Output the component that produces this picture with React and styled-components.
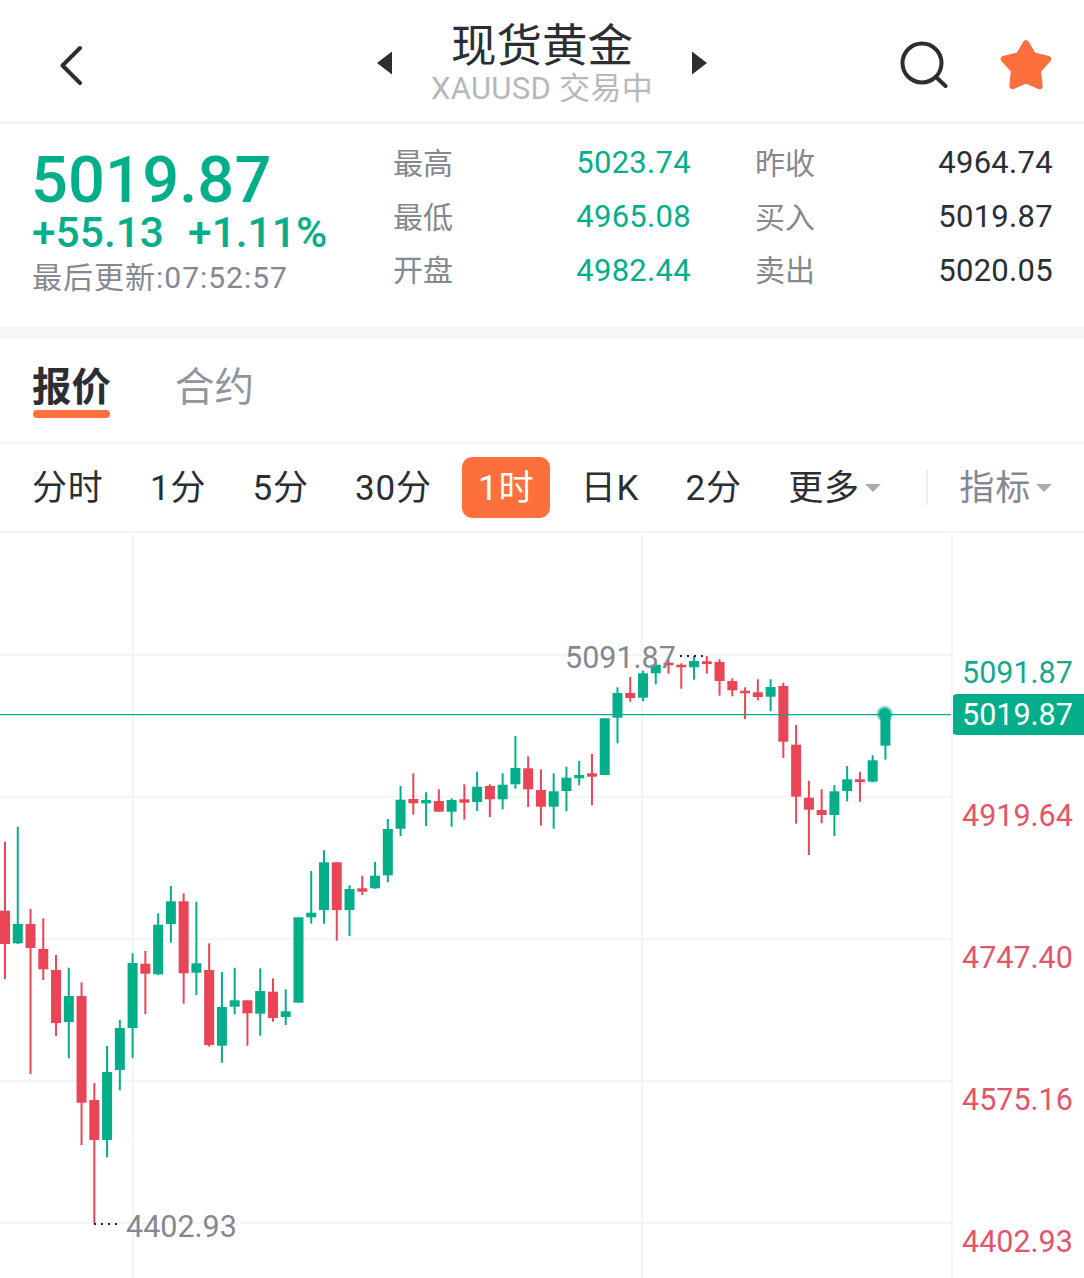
import styled, { createGlobalStyle } from "styled-components";

const GREEN = "#05ae8b";
const RED = "#ea4557";
const ORANGE = "#fd6f3d";
const DARK = "#2b2e33";
const GREY = "#85888f";
const LINE = "#f5f5f7";

const GlobalStyle = createGlobalStyle`
    html, body {
        margin: 0;
        padding: 0;
        background: #fff;
    }
    body {
        font-family: Roboto, "Noto Sans CJK SC", sans-serif;
        color: ${DARK};
    }
`;

const Page = styled.div`
    width: 1084px;
    height: 1278px;
    overflow: hidden;
    background: #fff;
    display: flex;
    flex-direction: column;
`;

const Header = styled.header`
    height: 124px;
    box-sizing: border-box;
    padding-top: 9px;
    display: grid;
    grid-template-columns: 1fr 332px 1fr;
    align-items: center;
    border-bottom: 3px solid ${LINE};
`;

const BackButton = styled.div`
    padding-left: 59px;
    display: flex;
    align-items: center;
`;

const Switcher = styled.div`
    display: flex;
    align-items: center;
    justify-content: space-between;
`;

const Arrow = styled.svg`
    margin-top: -4px;
`;

const Titles = styled.div`
    display: flex;
    flex-direction: column;
    align-items: center;
`;

const Title = styled.div`
    font-size: 45.5px;
    line-height: 50px;
    margin-top: -1px;
    color: ${DARK};
`;

const Subtitle = styled.div`
    font-size: 31px;
    line-height: 36px;
    margin-top: -1px;
    color: #b6b8bd;
    letter-spacing: 0.3px;
`;

const HeaderActions = styled.div`
    display: flex;
    justify-content: flex-end;
    align-items: center;
    gap: 50px;
    padding-right: 30px;
`;

const StatsSection = styled.section`
    height: 203px;
    display: flex;
    border-bottom: 12px solid #f4f6f8;
    padding-left: 33px;
`;

const PriceBlock = styled.div`
    width: 360px;
    display: flex;
    flex-direction: column;
`;

const BigPrice = styled.div`
    font-size: 65px;
    line-height: 66px;
    font-weight: 500;
    color: ${GREEN};
    margin: 23px 0 0 -2px;
    letter-spacing: 0.1px;
`;

const ChangeRow = styled.div`
    display: flex;
    gap: 24px;
    font-size: 42.5px;
    line-height: 42px;
    font-weight: 500;
    color: ${GREEN};
    margin: -1px 0 0 -1px;
`;

const UpdateTime = styled.div`
    font-size: 30px;
    line-height: 36px;
    margin: 6px 0 0 -1px;
    letter-spacing: 1px;
    color: ${GREY};
`;

const StatsGrid = styled.div`
    display: grid;
    grid-template-columns: 298px 298px;
    grid-auto-rows: 53.7px;
    column-gap: 64px;
    padding-top: 12px;
`;

const StatCell = styled.div`
    display: flex;
    align-items: center;
    justify-content: space-between;
`;

const StatLabel = styled.span`
    font-size: 30px;
    margin-top: -4px;
    color: ${GREY};
`;

const StatValue = styled.span`
    font-size: 31px;
    letter-spacing: 0.3px;
    color: ${(props) => (props.$green ? GREEN : DARK)};
`;

const Tabs = styled.nav`
    height: 103px;
    display: flex;
    gap: 64px;
    padding-left: 32px;
    border-bottom: 2px solid ${LINE};
`;

const Tab = styled.div`
    position: relative;
    font-size: 39.5px;
    line-height: 44px;
    padding-top: 27px;
    font-weight: ${(props) => (props.$active ? 700 : 400)};
    color: ${(props) => (props.$active ? DARK : "#93959d")};

    ${(props) =>
        props.$active &&
        `&::after {
            content: "";
            position: absolute;
            left: 1px;
            right: 1px;
            top: 71px;
            height: 8px;
            border-radius: 4px;
            background: ${ORANGE};
        }`}
`;

const Toolbar = styled.div`
    height: 87px;
    display: flex;
    align-items: center;
    gap: 14.3px;
    padding-left: 16px;
    border-bottom: 2px solid ${LINE};
`;

const Period = styled.div`
    height: 61px;
    box-sizing: border-box;
    padding: 0 16px 6px;
    display: flex;
    align-items: center;
    font-size: 35px;
    letter-spacing: 0.8px;
    border-radius: 10px;
    white-space: nowrap;
    color: ${(props) => (props.$active ? "#fff" : props.$muted ? GREY : DARK)};
    background: ${(props) => (props.$active ? ORANGE : "transparent")};
`;

const Caret = styled.i`
    width: 0;
    height: 0;
    margin: 6px 0 0 5px;
    border-left: 8px solid transparent;
    border-right: 8px solid transparent;
    border-top: 8px solid #a9abb0;
`;

const ToolDivider = styled.div`
    width: 2px;
    height: 35px;
    background: #eeeef0;
    margin-left: 15px;
    margin-right: 1px;
`;

const ChartArea = styled.div`
    flex: 1;
    display: flex;
    min-height: 0;
`;

const Plot = styled.div`
    position: relative;
    width: 953px;
    border-right: 2px solid ${LINE};
    box-sizing: border-box;

    svg {
        display: block;
    }
`;

const ExtremeLabel = styled.div`
    position: absolute;
    left: ${(props) => props.$x}px;
    top: ${(props) => props.$y}px;
    font-size: 30.5px;
    line-height: 36px;
    color: ${GREY};
`;

const Axis = styled.div`
    flex: 1;
    display: flex;
    flex-direction: column;
    padding-top: 120px;
    margin-left: -2px;
`;

const AxisLabel = styled.div`
    height: 40px;
    line-height: 40px;
    padding-left: 11px;
    margin-top: ${(props) => props.$gap}px;
    font-size: 30.5px;
    color: ${(props) => (props.$up ? "#17a98c" : "#e2566a")};
`;

const PriceTag = styled.div`
    height: 41px;
    line-height: 41px;
    margin-top: 1px;
    padding-left: 11px;
    border-radius: 6px 0 0 6px;
    background: ${GREEN};
    color: #fff;
    font-size: 30.5px;
`;

const stats = [
    ["最高", "5023.74", "昨收", "4964.74"],
    ["最低", "4965.08", "买入", "5019.87"],
    ["开盘", "4982.44", "卖出", "5020.05"],
];

const periods = ["分时", "1分", "5分", "30分", "1时", "日K", "2分"];

// [colour, wick top, body top, body bottom, wick bottom], page y coordinates
const candles = [
    ["r", 841.7, 910.7, 944, 979], ["g", 826.7, 924, 943.3, 944], ["r", 909, 924, 948, 1074],
    ["r", 918.3, 949, 969.3, 980], ["r", 955, 970, 1023, 1036], ["g", 967.7, 996, 1022, 1058.3],
    ["r", 982.3, 996, 1102.7, 1145], ["r", 1083, 1100, 1140, 1223.3], ["g", 1046, 1072, 1140, 1157.3],
    ["g", 1020, 1028, 1070, 1090.3], ["g", 953.3, 963, 1028, 1058], ["r", 951, 963.7, 973.7, 1014],
    ["g", 913.3, 924.7, 974.3, 975], ["g", 886, 901.3, 924, 942.7], ["r", 893.3, 901.3, 973.3, 1003.7],
    ["g", 901.7, 963.3, 972.7, 995], ["r", 943.3, 970, 1045, 1046.7], ["g", 972, 1007, 1045.7, 1062.7],
    ["g", 967.7, 1000.3, 1006.7, 1014.3], ["r", 1000.3, 1000.3, 1013.3, 1045.7], ["g", 968.3, 991, 1013.7, 1035.7],
    ["r", 978.3, 991.7, 1018, 1021.7], ["g", 989.3, 1011.3, 1017, 1025], ["g", 917.3, 917.3, 1002.7, 1002.7],
    ["g", 871, 912.7, 917.3, 923.7], ["g", 850.3, 862.3, 910, 923.7], ["r", 862.3, 862.3, 910, 940.7],
    ["g", 885.3, 889, 910, 936], ["r", 875.7, 888.3, 891.7, 895], ["g", 862, 875.7, 888.3, 888.7],
    ["g", 819, 829, 875.3, 882.3], ["g", 786, 799.7, 828.7, 836], ["r", 773.3, 799, 803.3, 814.7],
    ["g", 792.3, 800, 803.3, 826], ["r", 789.3, 801, 811.7, 811.7], ["g", 798.3, 800, 811.7, 826.7],
    ["r", 784.3, 799.3, 802.7, 819.7], ["g", 771.7, 786.7, 802, 811], ["r", 784.3, 786, 799.3, 817],
    ["g", 773.3, 784.7, 799.3, 809.3], ["g", 736, 768, 784.3, 788.7], ["r", 756.3, 768.3, 789.3, 807],
    ["r", 769.3, 790, 806.7, 825.7], ["g", 773.3, 791.3, 806.7, 828.7], ["g", 766.7, 777.7, 791, 811.3],
    ["g", 761, 775, 778.3, 785.3], ["r", 754, 773.3, 776.7, 805.3], ["g", 718.3, 718.3, 775, 775],
    ["g", 687.3, 693, 717.7, 743.3], ["r", 677, 693, 698, 701.7], ["g", 670.7, 673.3, 697.7, 701],
    ["g", 661.7, 664.7, 673.3, 684.3], ["r", 660, 662.7, 665.3, 673.7], ["r", 663.3, 664.7, 667.3, 688.7],
    ["g", 656, 661, 667.3, 679.7], ["r", 656, 661.3, 664, 673.7], ["r", 659.3, 662, 681, 695.7],
    ["r", 678.3, 681, 690.3, 696.3], ["r", 687.3, 690.7, 693.3, 719.3], ["r", 679.3, 692.3, 697, 700.3],
    ["g", 679.3, 687, 696.7, 711.3], ["r", 682.7, 686, 741.7, 758], ["r", 725, 744.7, 796.7, 823.7],
    ["r", 780.7, 797.7, 809.7, 855], ["r", 789.3, 810, 815, 823.3], ["g", 785, 791.3, 815, 836],
    ["g", 766, 779.3, 791, 801.3], ["r", 771.7, 779.3, 782, 801.7], ["g", 755.3, 760.3, 781.7, 782.3],
    ["g", 708.3, 713.3, 745.7, 759.7],
];

const CandleChart = () => (
    <svg width="951" height="745" viewBox="0 533 951 745">
        <defs>
            <radialGradient id="pulse">
                <stop offset="0%" stopColor={GREEN} />
                <stop offset="55%" stopColor={GREEN} />
                <stop offset="100%" stopColor={GREEN} stopOpacity="0" />
            </radialGradient>
        </defs>
        {[655, 797, 939, 1081, 1223].map((y) => (
            <line key={y} x1="0" x2="951" y1={y} y2={y} stroke={LINE} strokeWidth="2" />
        ))}
        {[133, 642].map((x) => (
            <line key={x} x1={x} x2={x} y1="533" y2="1278" stroke={LINE} strokeWidth="2" />
        ))}
        {candles.map(([c, wickTop, top, bottom, wickBottom], i) => {
            const x = 5 + 12.76 * i;
            const fill = c === "g" ? GREEN : RED;
            return (
                <g key={i} fill={fill}>
                    <rect x={x - 1} y={wickTop} width="2" height={wickBottom - wickTop} />
                    <rect x={x - 5} y={top} width="10" height={bottom - top} />
                </g>
            );
        })}
        <line x1="0" x2="951" y1="714.7" y2="714.7" stroke={GREEN} strokeWidth="1.2" />
        <circle cx="884.7" cy="714" r="9" fill="url(#pulse)" />
        <line x1="94" x2="121" y1="1224" y2="1224" stroke="#222" strokeWidth="2" strokeDasharray="2 5" />
        <line x1="680" x2="708" y1="656" y2="656" stroke="#222" strokeWidth="2" strokeDasharray="2 5" />
    </svg>
);

const App = () => (
    <Page>
        <GlobalStyle />
        <Header>
            <BackButton>
                <svg width="26" height="40" viewBox="0 0 26 40" fill="none" stroke={DARK} strokeWidth="4" strokeLinecap="round" strokeLinejoin="round">
                    <path d="M21 3 L3.5 20.5 L21 38" />
                </svg>
            </BackButton>
            <Switcher>
                <Arrow width="17" height="24" viewBox="0 0 17 24"><path d="M16 0.5V23.5L1 12Z" fill={DARK} /></Arrow>
                <Titles>
                    <Title>现货黄金</Title>
                    <Subtitle>XAUUSD 交易中</Subtitle>
                </Titles>
                <Arrow width="17" height="24" viewBox="0 0 17 24"><path d="M1 0.5V23.5L16 12Z" fill={DARK} /></Arrow>
            </Switcher>
            <HeaderActions>
                <svg width="48" height="48" viewBox="0 0 48 48" fill="none" stroke={DARK} strokeWidth="4" strokeLinecap="round">
                    <circle cx="22" cy="22" r="19.5" />
                    <path d="M36 36 L45.5 45" />
                </svg>
                <svg width="56" height="54" viewBox="0 0 52 50">
                    <polygon
                        points="26,5 32.5,16 46.5,19.5 37,30 38.5,44.5 26,39 13.5,44.5 15,30 5.5,19.5 19.5,16"
                        fill={ORANGE}
                        stroke={ORANGE}
                        strokeWidth="6"
                        strokeLinejoin="round"
                    />
                </svg>
            </HeaderActions>
        </Header>

        <StatsSection>
            <PriceBlock>
                <BigPrice>5019.87</BigPrice>
                <ChangeRow>
                    <span>+55.13</span>
                    <span>+1.11%</span>
                </ChangeRow>
                <UpdateTime>最后更新:07:52:57</UpdateTime>
            </PriceBlock>
            <StatsGrid>
                {stats.map(([l1, v1, l2, v2]) => [
                    <StatCell key={l1}>
                        <StatLabel>{l1}</StatLabel>
                        <StatValue $green>{v1}</StatValue>
                    </StatCell>,
                    <StatCell key={l2}>
                        <StatLabel>{l2}</StatLabel>
                        <StatValue>{v2}</StatValue>
                    </StatCell>,
                ])}
            </StatsGrid>
        </StatsSection>

        <Tabs>
            <Tab $active>报价</Tab>
            <Tab>合约</Tab>
        </Tabs>

        <Toolbar>
            {periods.map((p) => (
                <Period key={p} $active={p === "1时"}>{p}</Period>
            ))}
            <Period>更多<Caret /></Period>
            <ToolDivider />
            <Period $muted>指标<Caret /></Period>
        </Toolbar>

        <ChartArea>
            <Plot>
                <CandleChart />
                <ExtremeLabel $x={565} $y={107}>5091.87</ExtremeLabel>
                <ExtremeLabel $x={126} $y={676}>4402.93</ExtremeLabel>
            </Plot>
            <Axis>
                <AxisLabel $up $gap={0}>5091.87</AxisLabel>
                <PriceTag>5019.87</PriceTag>
                <AxisLabel $gap={61}>4919.64</AxisLabel>
                <AxisLabel $gap={102}>4747.40</AxisLabel>
                <AxisLabel $gap={102}>4575.16</AxisLabel>
                <AxisLabel $gap={102}>4402.93</AxisLabel>
            </Axis>
        </ChartArea>
    </Page>
);

export default App;
